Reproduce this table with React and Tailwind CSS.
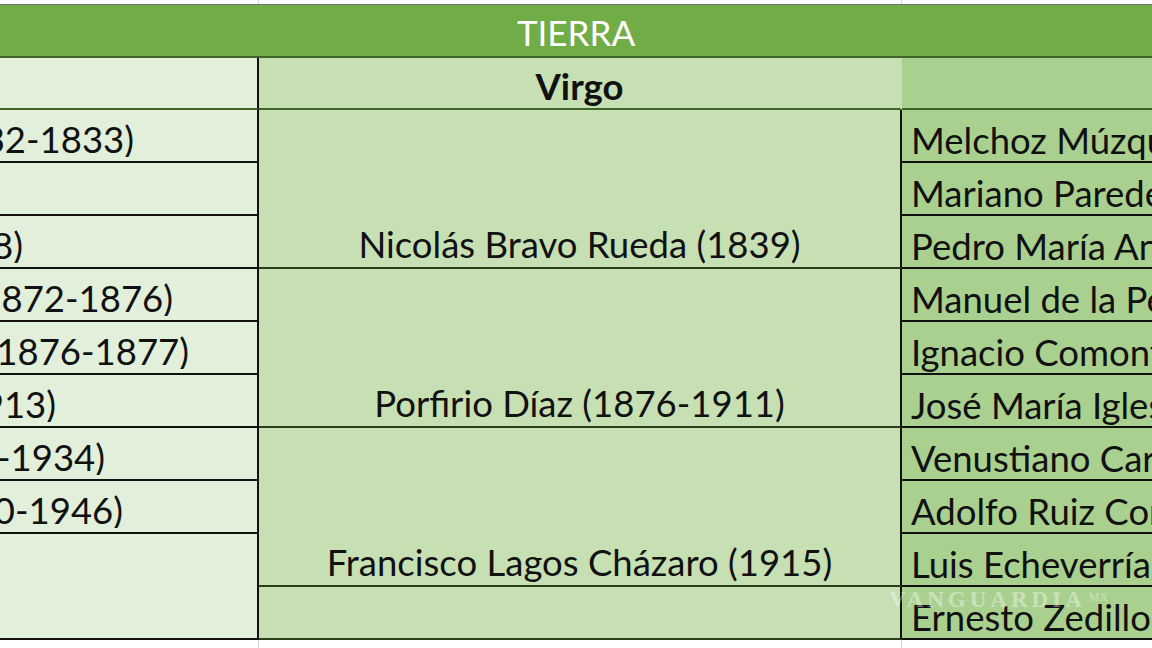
const TAURO = [
  { text: "(1832-1833)", end: "w-[134px]", row: "row-start-2" },
  { text: "", end: "w-[0px]", row: "row-start-3" },
  { text: "(1848)", end: "w-[23px]", row: "row-start-4" },
  { text: "(1872-1876)", end: "w-[173px]", row: "row-start-5" },
  { text: "(1876-1877)", end: "w-[189px]", row: "row-start-6" },
  { text: "(1913)", end: "w-[56px]", row: "row-start-7" },
  { text: "(1932-1934)", end: "w-[105px]", row: "row-start-8" },
  { text: "(1940-1946)", end: "w-[123px]", row: "row-start-9" },
];

const VIRGO = [
  { text: "Nicolás Bravo Rueda (1839)", rows: "row-start-2 row-span-3" },
  { text: "Porfirio Díaz (1876-1911)", rows: "row-start-5 row-span-3" },
  { text: "Francisco Lagos Cházaro (1915)", rows: "row-start-8 row-span-3" },
  { text: "", rows: "row-start-11 row-span-1" },
];

const CAPRICORNIO = [
  "Melchoz Múzquiz (1832)",
  "Mariano Paredes (1846)",
  "Pedro María Anaya (1847)",
  "Manuel de la Peña y Peña (1847)",
  "Ignacio Comonfort (1855)",
  "José María Iglesias (1876)",
  "Venustiano Carranza (1917)",
  "Adolfo Ruiz Cortines (1952)",
  "Luis Echeverría (1970)",
  "Ernesto Zedillo (1994)",
];

const font = "font-['Lato','Open_Sans',sans-serif]";

export default function App() {
  return (
    <div className={`relative h-[648px] w-[1152px] overflow-hidden bg-white text-[#111] ${font}`}>
      {/* sheet gridlines above the table */}
      <div className="flex h-[5px] border-b border-[#6e6e6e]">
        <div className="w-[259px] border-r border-[#d4d4d4]" />
        <div className="w-[643px] border-r border-[#d4d4d4]" />
      </div>

      <div className="flex h-[53px] items-center justify-center border-b-2 border-[#3f6428] bg-[#70ad47] pt-[4px] text-[35px] leading-none text-white">
        TIERRA
      </div>

      <div className="grid grid-cols-[259px_643px_250px] grid-rows-[52px_repeat(10,53px)] text-[36.5px] leading-none">
        {/* Tauro column */}
        <div className="col-start-1 row-start-1 border-b-2 border-r-2 border-b-[#3f6428] border-r-[#111] bg-[#e2efda]" />
        {TAURO.map((c) => (
          <div
            key={c.row}
            className={`col-start-1 ${c.row} flex items-end overflow-hidden border-b-2 border-r-2 border-[#111] bg-[#e2efda] pb-[4px]`}
          >
            <div className={`${c.end} flex shrink-0 justify-end overflow-hidden whitespace-nowrap`}>
              <span className="shrink-0">{c.text}</span>
            </div>
          </div>
        ))}
        <div className="col-start-1 row-start-10 row-span-2 border-b-2 border-r-2 border-[#111] bg-[#e2efda]" />

        {/* Virgo column */}
        <div className="col-start-2 row-start-1 flex items-center justify-center border-b-2 border-r-2 border-b-[#3f6428] border-r-[#c6e0b4] bg-[#c6e0b4] pt-[6px] font-bold">
          Virgo
        </div>
        {VIRGO.map((c) => (
          <div
            key={c.rows}
            className={`col-start-2 ${c.rows} flex items-end justify-center border-b-2 border-r-2 border-b-[#2a3f1c] border-r-[#111] bg-[#c6e0b4] pb-[5px]`}
          >
            {c.text}
          </div>
        ))}

        {/* Capricornio column */}
        <div className="col-start-3 row-start-1 border-b-2 border-[#3f6428] bg-[#a9d08e]" />
        {CAPRICORNIO.map((name) => (
          <div
            key={name}
            className="col-start-3 flex items-end overflow-hidden whitespace-nowrap border-b-2 border-[#111] bg-[#a9d08e] pb-[3px] pl-[9px]"
          >
            {name}
          </div>
        ))}
      </div>

      {/* gridlines below the table */}
      <div className="flex h-[8px]">
        <div className="w-[259px] border-r border-[#d4d4d4]" />
        <div className="w-[643px] border-r border-[#d4d4d4]" />
      </div>

      {/* watermark */}
      <div className="pointer-events-none absolute left-[889px] top-[588px] flex items-start gap-[3px] font-['Liberation_Serif',serif] text-white/40">
        <span className="text-[23px] font-bold leading-none tracking-[4px]">VANGUARDIA</span>
        <span className="pt-[3px] text-[12px] leading-none">MX</span>
      </div>
    </div>
  );
}
